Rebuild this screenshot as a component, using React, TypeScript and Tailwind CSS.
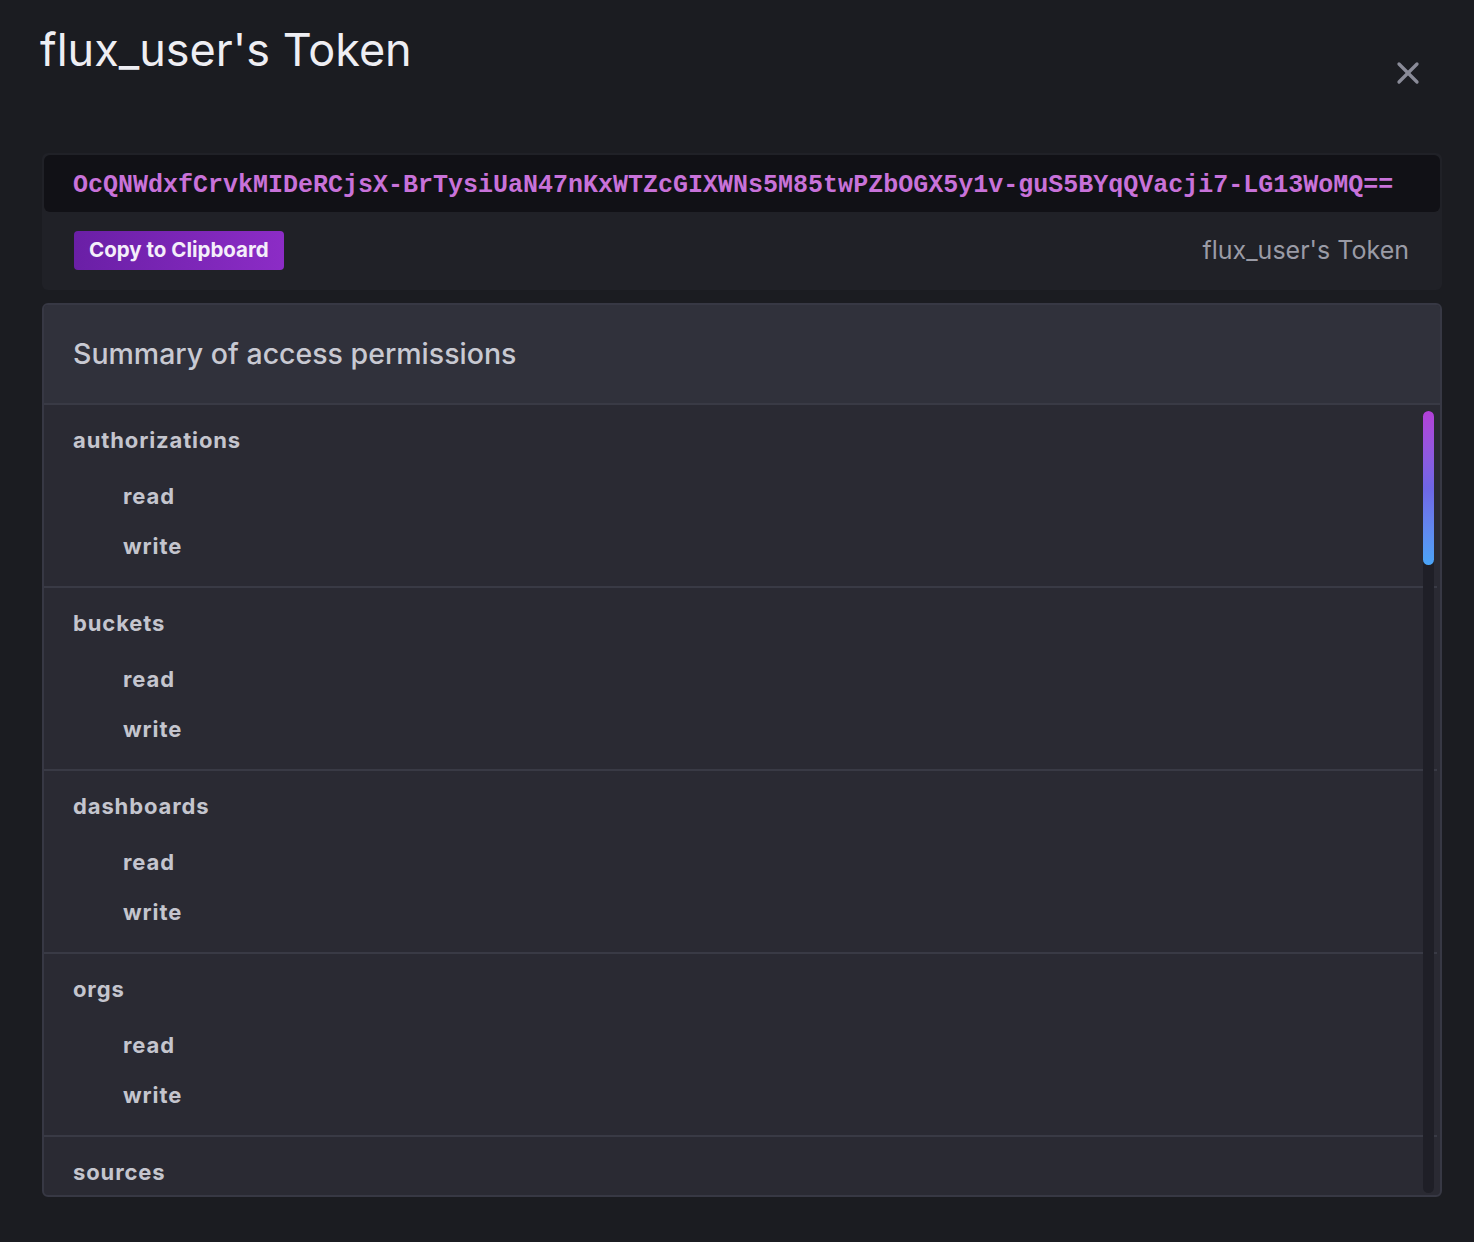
import { X } from 'lucide-react'

const token = 'OcQNWdxfCrvkMIDeRCjsX-BrTysiUaN47nKxWTZcGIXWNs5M85twPZbOGX5y1v-guS5BYqQVacji7-LG13WoMQ=='

const resources = ['authorizations', 'buckets', 'dashboards', 'orgs']

function PermissionGroup({ name, actions }: { name: string; actions: string[] }) {
  return (
    <div className="border-b-2 border-[#393a45] pl-[29px] pt-[22px] pb-[15px]">
      <div className="h-[26px] text-[22px] font-bold leading-[26px] tracking-[0.04em] text-[#c4c5ce]">{name}</div>
      {actions.length > 0 ? (
        <div className="mt-[18px] pl-[50px]">
          {actions.map((a) => (
            <div key={a} className="h-[50px] text-[22px] font-bold leading-[50px] tracking-[0.04em] text-[#c4c5ce]">
              {a}
            </div>
          ))}
        </div>
      ) : null}
    </div>
  )
}

export default function App() {
  return (
    <div
      className="flex h-[1242px] w-full flex-col overflow-hidden bg-[#1b1c21] pl-[42px] pr-[32px]"
      style={{ fontFamily: 'Inter, "Noto Sans", sans-serif' }}
    >
      <div className="flex h-[153px] items-start justify-between">
        <h1 className="-ml-[2px] mt-[22px] text-[45px] font-normal leading-[56px] text-[#eeeef3]">
          flux_user's Token
        </h1>
        <button type="button" className="mt-[55px] mr-[16px] text-[#8a8b98]" aria-label="Close">
          <X size={36} strokeWidth={2.2} />
        </button>
      </div>

      <div className="rounded-md bg-[#202127] p-[2px] pb-[20px]">
        <div className="flex h-[57px] items-center rounded-md bg-[#111116] pl-[29px] pt-[5px]">
          <code
            className="whitespace-nowrap text-[25px] font-bold text-[#c872d9]"
            style={{ fontFamily: '"Liberation Mono", "DejaVu Sans Mono", monospace' }}
          >
            {token}
          </code>
        </div>
        <div className="mt-[19px] flex items-center justify-between pl-[30px] pr-[31px]">
          <button
            type="button"
            className="h-[39px] rounded-[4px] bg-gradient-to-r from-[#6a1fa6] to-[#8c2cc6] px-[15px] text-[20.5px] font-bold text-[#f4eefa]"
          >
            Copy to Clipboard
          </button>
          <span className="text-[25px] text-[#9a9ba6]">flux_user's Token</span>
        </div>
      </div>

      <div className="mt-[13px] h-[894px] overflow-hidden rounded-md border-2 border-[#373844] bg-[#2a2a33]">
        <div className="flex h-[100px] items-center border-b-2 border-[#393a45] bg-[#30313b] pl-[29px]">
          <h2 className="text-[28.5px] font-medium text-[#c8c9d2]">Summary of access permissions</h2>
        </div>
        <div className="relative h-[790px] overflow-hidden">
          <div className="pr-[3px]">
            {resources.map((r) => (
              <PermissionGroup key={r} name={r} actions={['read', 'write']} />
            ))}
            <PermissionGroup name="sources" actions={[]} />
          </div>
          <div className="absolute right-[6px] top-[6px] bottom-[2px] w-[11px] rounded-full bg-[#1f1f27]">
            <div className="h-[154px] w-full rounded-full bg-gradient-to-b from-[#b33fd8] via-[#6f66e6] to-[#49a4f7]" />
          </div>
        </div>
      </div>
    </div>
  )
}
